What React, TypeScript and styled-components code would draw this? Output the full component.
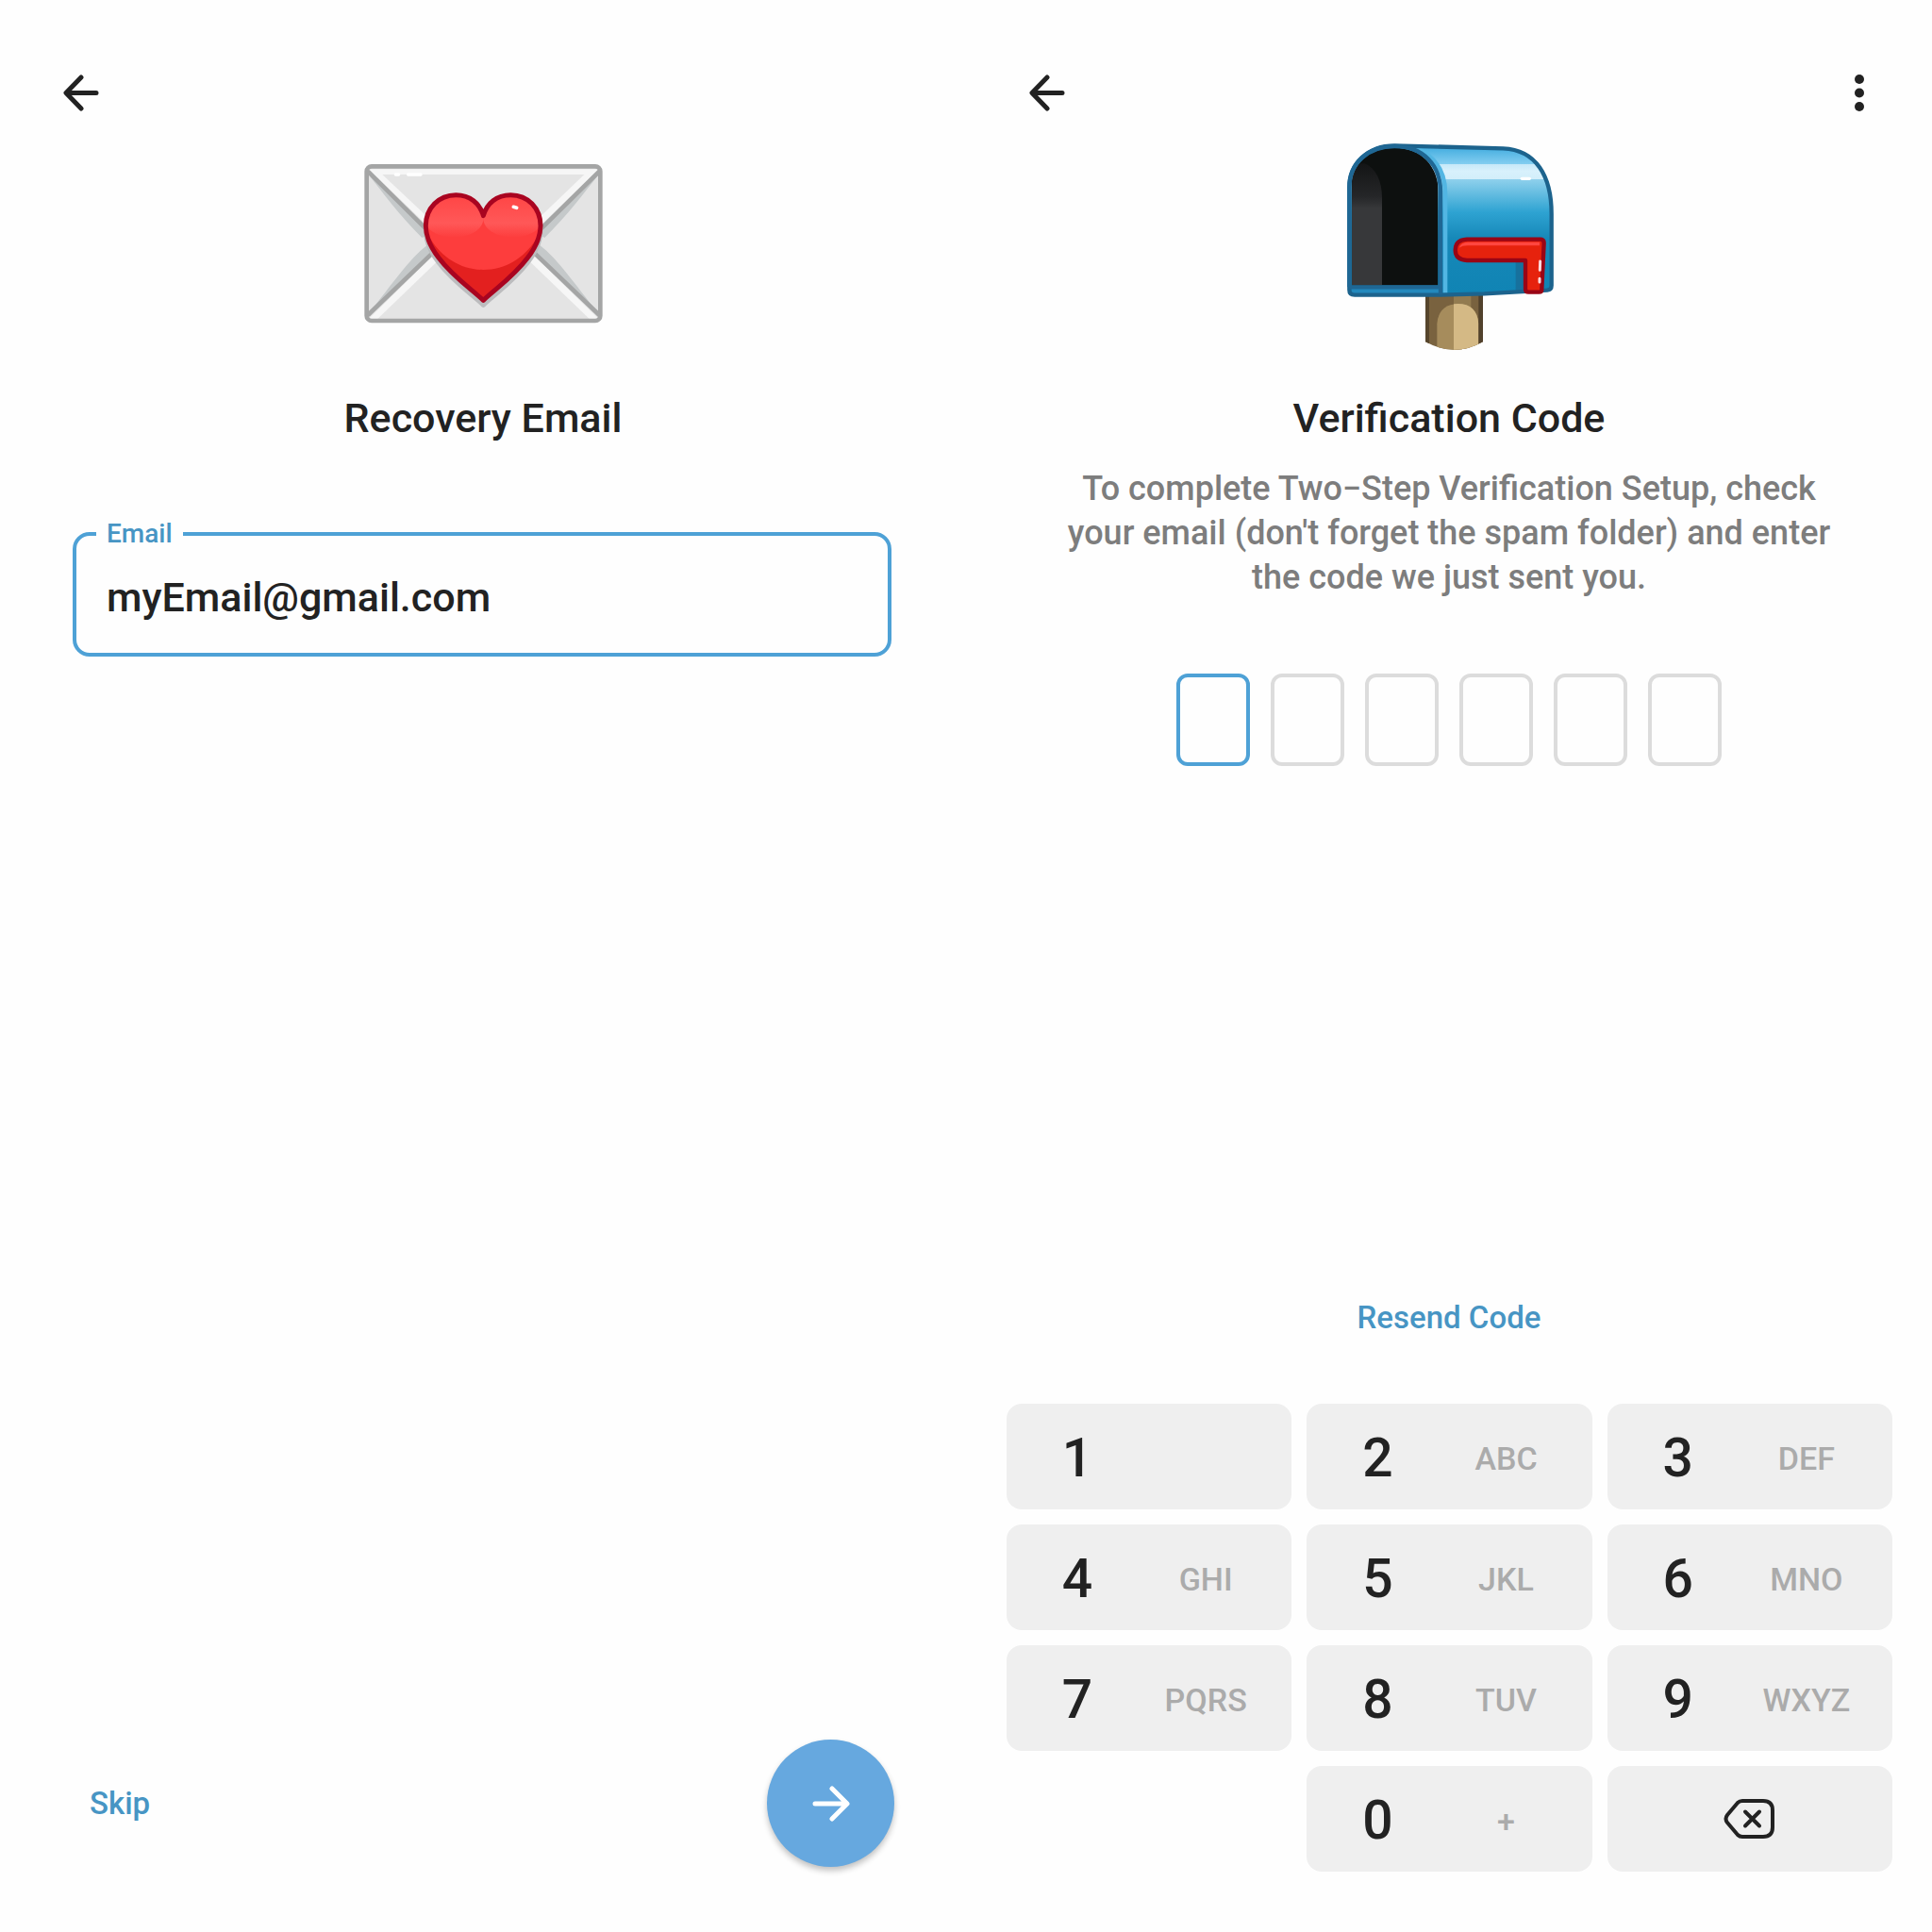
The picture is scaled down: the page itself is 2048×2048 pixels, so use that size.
import React from "react";
import styled, { createGlobalStyle } from "styled-components";

const color = {
  page: "#fefefe",
  ink: "#222222",
  muted: "#7d7d7d",
  hint: "#ababab",
  key: "#efefef",
  outline: "#dcdcdc",
  accent: "#4ea1d6",
  link: "#4795c4",
  fab: "#66a8df",
};

const GlobalStyle = createGlobalStyle`
  *, *::before, *::after { box-sizing: border-box; }
  body {
    margin: 0;
    background: ${color.page};
    color: ${color.ink};
    font-family: Roboto, "Liberation Sans", sans-serif;
    font-weight: 500;
  }
  button, input { font: inherit; color: inherit; }
`;

const Screens = styled.div`
  display: grid;
  grid-template-columns: 1fr 1fr;
  min-height: 100vh;

  @media (max-width: 1100px) {
    grid-template-columns: 1fr;
  }
`;

const Screen = styled.main`
  display: flex;
  flex-direction: column;
  min-height: 100vh;
`;

const TopBar = styled.header`
  display: flex;
  justify-content: space-between;
  padding: 68px 46px 2px 55px;
`;

const IconButton = styled.button`
  display: grid;
  place-items: center;
  width: 62px;
  height: 60px;
  padding: 0;
  border: 0;
  background: none;
  cursor: pointer;
`;

const Hero = styled.div`
  display: flex;
  justify-content: center;
  height: 260px;
`;

const Title = styled.h1`
  margin: 24px 0 0;
  font-size: 43px;
  line-height: 58px;
  font-weight: 500;
  text-align: center;
`;

const Description = styled.p`
  margin: 23px 0 0;
  padding: 0 100px;
  color: ${color.muted};
  font-size: 36px;
  line-height: 47px;
  text-align: center;
`;

const Field = styled.fieldset`
  margin: 77px 79px 0 77px;
  padding: 0 21px;
  border: 4px solid ${color.accent};
  border-radius: 18px;
`;

const FieldLegend = styled.legend`
  padding: 0 11px;
  color: ${color.link};
  font-size: 28px;
  line-height: 34px;
`;

const EmailInput = styled.input`
  display: block;
  width: 100%;
  height: 109px;
  padding: 0 11px 10px;
  border: 0;
  outline: 0;
  background: none;
  font-size: 43px;
`;

const CodeRow = styled.div`
  display: flex;
  justify-content: center;
  gap: 22px;
  margin-top: 78px;
`;

const CodeInput = styled.input<{ $active: boolean }>`
  width: 78px;
  height: 98px;
  padding: 0;
  border: 4px solid ${(p) => (p.$active ? color.accent : color.outline)};
  border-radius: 12px;
  outline: 0;
  background: none;
  font-size: 43px;
  text-align: center;
`;

const TextButton = styled.button`
  padding: 16px;
  border: 0;
  background: none;
  color: ${color.link};
  font-size: 33px;
  line-height: 40px;
  cursor: pointer;
`;

const BottomBar = styled.footer`
  display: flex;
  align-items: center;
  justify-content: space-between;
  margin-top: auto;
  padding: 0 76px 69px 79px;
`;

const NextButton = styled.button`
  display: grid;
  place-items: center;
  width: 135px;
  height: 135px;
  padding: 0;
  border: 0;
  border-radius: 50%;
  background: ${color.fab};
  color: #ffffff;
  box-shadow: 0 4px 6px rgba(0, 0, 0, 0.24);
  cursor: pointer;
`;

const Resend = styled.div`
  display: flex;
  justify-content: center;
  margin-top: auto;
  padding-bottom: 55px;
`;

const Keypad = styled.div`
  display: grid;
  grid-template-columns: repeat(3, 1fr);
  grid-auto-rows: 112px;
  gap: 16px;
  padding: 0 42px 64px 43px;
`;

const Key = styled.button`
  display: grid;
  grid-template-columns: 62px 1fr;
  align-items: center;
  column-gap: 14px;
  padding: 4px 0 0 44px;
  border: 0;
  border-radius: 16px;
  background: ${color.key};
  text-align: center;
  cursor: pointer;
`;

const ZeroKey = styled(Key)`
  grid-column: 2;
`;

const DeleteKey = styled(Key)`
  grid-template-columns: 1fr;
  grid-column: 3;
  justify-items: center;
  padding: 0;
`;

const Digit = styled.span`
  font-size: 57px;
  line-height: 64px;
`;

const Letters = styled.span`
  color: ${color.hint};
  font-size: 34px;
  line-height: 40px;
`;

const BackArrow = () => (
  <svg width="40" height="40" viewBox="0 0 40 40" fill="none" stroke="currentColor" strokeWidth="5" strokeLinecap="round" strokeLinejoin="round" aria-hidden="true">
    <path d="M36 20.500H4.500M20 4L4 20.500L20 37" />
  </svg>
);

const NextArrow = () => (
  <svg width="40" height="40" viewBox="0 0 40 40" fill="none" stroke="currentColor" strokeWidth="5" strokeLinecap="round" strokeLinejoin="round" aria-hidden="true">
    <path d="M3 20H36M21 4L37 20L21 36" />
  </svg>
);

const MoreDots = () => (
  <svg width="12" height="40" viewBox="0 0 12 40" fill="currentColor" aria-hidden="true">
    <circle cx="6" cy="6" r="5" />
    <circle cx="6" cy="20.500" r="5" />
    <circle cx="6" cy="35" r="5" />
  </svg>
);

const Backspace = () => (
  <svg width="56" height="44" viewBox="0 0 56 44" fill="none" stroke={color.ink} strokeWidth="4" strokeLinecap="round" strokeLinejoin="round" aria-hidden="true">
    <path d="M20 3H42Q52 3 52 13V31Q52 41 42 41H20Q17 41 15 39L4 26Q1 22 4 18L15 5Q17 3 20 3Z" />
    <path d="M23 14.500L38 29.500M38 14.500L23 29.500" />
  </svg>
);

const heart =
  "M427 505C385 466 330 430 285 370C256 332 244 302 244 268C244 212 285 170 340 170C384 170 416 196 427 236C438 196 470 170 514 170C569 170 609 212 609 268C609 302 597 332 568 370C523 430 469 466 427 505Z";

const LoveLetter = () => (
  <svg width="290" height="260" viewBox="-9 -60 870 780" role="img" aria-label="Envelope with a heart">
    <defs>
      <clipPath id="envelopeClip">
        <rect x="55" y="79" width="745" height="492" rx="18" />
      </clipPath>
      <clipPath id="heartClip">
        <path d={heart} />
      </clipPath>
      <linearGradient id="lobe" gradientUnits="userSpaceOnUse" x1="0" y1="175" x2="0" y2="305">
        <stop offset="0" stopColor="#ff4646" />
        <stop offset="0.650" stopColor="#ff5858" />
        <stop offset="1" stopColor="#fd3d3d" />
      </linearGradient>
    </defs>
    <g clipPath="url(#envelopeClip)">
      <rect x="55" y="79" width="745" height="492" fill="#e4e4e4" />
      <path d="M62 105C105 160 160 235 232 306L262 290Z" fill="#c5c9ca" />
      <path d="M794 105C750 160 695 235 622 306L592 290Z" fill="#c5c9ca" />
      <path d="M62 548C140 450 190 375 248 330L270 345Z" fill="#c5c9ca" />
      <path d="M794 548C715 450 665 375 607 330L585 345Z" fill="#c5c9ca" />
      <path d="M62 88H794L430 440Z" fill="#f6f6f6" />
      <path d="M106 105H748L430 410Z" fill="#e4e4e4" />
      <path d="M62 565L300 330H555L794 565Z" fill="#f6f6f6" />
      <path d="M90 565L315 348H540L765 565Z" fill="#e4e4e4" />
      <path d="M60 95L250 283M796 95L605 283M60 552L265 355M796 552L590 355" fill="none" stroke="#a4a5a5" strokeWidth="14" />
    </g>
    <rect x="56" y="79" width="743" height="491" rx="16" fill="none" stroke="#a4a5a5" strokeWidth="14" />
    <path d="M148 105H158M188 105H228" stroke="#ffffff" strokeWidth="10" strokeLinecap="round" />
    <path d={heart} transform="translate(0 15)" fill="#bcbcbe" stroke="#bcbcbe" strokeWidth="15" strokeLinejoin="round" />
    <path d={heart} fill="#fd3d3d" />
    <g clipPath="url(#heartClip)">
      <path d="M244 160H427V250C415 320 265 320 244 262Z" fill="url(#lobe)" />
      <path d="M427 160H610V262C589 320 439 320 427 250Z" fill="url(#lobe)" />
      <path d="M240 270C270 350 340 408 427 408C514 408 584 350 615 270V520H240Z" fill="#e3201f" />
    </g>
    <path d={heart} fill="none" stroke="#a90420" strokeWidth="15" strokeLinejoin="round" />
    <path d="M523 208L533 211" fill="none" stroke="#ffffff" strokeWidth="11" strokeLinecap="round" />
  </svg>
);

const shell =
  "M235 73L580 82C685 86 734 170 734 290V518Q734 531 720 533L520 544L380 548H108Q91 548 91 532V205C91 130 150 73 235 73Z";
const flag =
  "M465 371H698Q710 371 710 383L703 530Q703 539 694 539H661Q651 539 651 529V438H465Q428 436 428 405Q428 373 465 371Z";

const Mailbox = () => (
  <svg width="270" height="260" viewBox="3 0 810 780" role="img" aria-label="Open mailbox with lowered flag">
    <defs>
      <linearGradient id="shellFill" gradientUnits="userSpaceOnUse" x1="0" y1="80" x2="0" y2="545">
        <stop offset="0" stopColor="#45aee0" />
        <stop offset="0.110" stopColor="#82cdf0" />
        <stop offset="0.111" stopColor="#c5e8f8" />
        <stop offset="0.160" stopColor="#d8f1fc" />
        <stop offset="0.215" stopColor="#d2eefa" />
        <stop offset="0.217" stopColor="#8ed0ec" />
        <stop offset="0.440" stopColor="#2ea3d2" />
        <stop offset="0.620" stopColor="#1688b8" />
        <stop offset="1" stopColor="#1084b4" />
      </linearGradient>
      <linearGradient id="innerFill" gradientUnits="userSpaceOnUse" x1="0" y1="130" x2="0" y2="280">
        <stop offset="0" stopColor="#141516" />
        <stop offset="0.700" stopColor="#252628" />
        <stop offset="0.950" stopColor="#37383a" />
      </linearGradient>
      <clipPath id="innerClip">
        <path d="M98 518V205C98 130 155 80 235 80C320 80 374 138 374 220V518Z" />
      </clipPath>
      <clipPath id="postClip">
        <path d="M333 540H516V697Q425 748 333 697Z" />
      </clipPath>
    </defs>
    <g clipPath="url(#postClip)">
      <rect x="333" y="540" width="183" height="200" fill="#79623f" />
      <rect x="333" y="540" width="12" height="200" fill="#56452c" />
      <rect x="423" y="540" width="55" height="200" fill="#927b50" />
      <path d="M370 740V640Q375 578 437 576Q497 578 502 640V740Z" fill="#a68c5c" />
      <path d="M423 740V577Q497 570 502 640V740Z" fill="#d4b985" />
      <rect x="502" y="540" width="14" height="200" fill="#51412c" />
    </g>
    <path d={shell} fill="url(#shellFill)" />
    <path d="M300 80C360 105 396 150 396 225V542" fill="none" stroke="#52b6e3" strokeWidth="14" />
    <path d="M620 440H650V532L620 536Z" fill="#17719d" />
    <path d="M98 525H380V544H98Z" fill="#2389bd" />
    <path d={shell} fill="none" stroke="#1c638d" strokeWidth="13" strokeLinejoin="round" />
    <g clipPath="url(#innerClip)">
      <rect x="98" y="80" width="276" height="440" fill="#0d100f" />
      <path d="M98 130H140C175 145 195 185 195 240V518H98Z" fill="url(#innerFill)" />
    </g>
    <path d="M91 523V205C91 130 150 75 235 75C325 75 381 135 381 220V545M91 523H381" fill="none" stroke="#1f6794" strokeWidth="13" />
    <path d="M640 178H664" stroke="#ffffff" strokeWidth="10" strokeLinecap="round" />
    <path d={flag} fill="#e6220d" />
    <path d="M440 398Q446 380 467 380H696V391H467Q450 391 440 398Z" fill="#ff4640" />
    <path d={flag} fill="none" stroke="#990516" strokeWidth="13" strokeLinejoin="round" />
    <path d="M698 441L697 469M696 496V507" stroke="#ffd9dc" strokeWidth="9" strokeLinecap="round" />
  </svg>
);

const keys = [
  ["1", ""],
  ["2", "ABC"],
  ["3", "DEF"],
  ["4", "GHI"],
  ["5", "JKL"],
  ["6", "MNO"],
  ["7", "PQRS"],
  ["8", "TUV"],
  ["9", "WXYZ"],
];

const RecoveryEmail = () => (
  <Screen>
    <TopBar>
      <IconButton type="button" aria-label="Back">
        <BackArrow />
      </IconButton>
    </TopBar>
    <Hero>
      <LoveLetter />
    </Hero>
    <Title>Recovery Email</Title>
    <Field>
      <FieldLegend>
        <label htmlFor="email">Email</label>
      </FieldLegend>
      <EmailInput id="email" type="email" defaultValue="myEmail@gmail.com" />
    </Field>
    <BottomBar>
      <TextButton type="button">Skip</TextButton>
      <NextButton type="button" aria-label="Next">
        <NextArrow />
      </NextButton>
    </BottomBar>
  </Screen>
);

const VerificationCode = () => (
  <Screen>
    <TopBar>
      <IconButton type="button" aria-label="Back">
        <BackArrow />
      </IconButton>
      <IconButton type="button" aria-label="More options">
        <MoreDots />
      </IconButton>
    </TopBar>
    <Hero>
      <Mailbox />
    </Hero>
    <Title>Verification Code</Title>
    <Description>
      To complete Two−Step Verification Setup, check your email (don't forget the spam folder) and enter the code we
      just sent you.
    </Description>
    <CodeRow>
      {[1, 2, 3, 4, 5, 6].map((n) => (
        <CodeInput key={n} $active={n === 1} aria-label={`Code digit ${n}`} inputMode="numeric" maxLength={1} />
      ))}
    </CodeRow>
    <Resend>
      <TextButton type="button">Resend Code</TextButton>
    </Resend>
    <Keypad>
      {keys.map(([digit, letters]) => (
        <Key key={digit} type="button">
          <Digit>{digit}</Digit>
          {letters && <Letters>{letters}</Letters>}
        </Key>
      ))}
      <ZeroKey type="button">
        <Digit>0</Digit>
        <Letters>+</Letters>
      </ZeroKey>
      <DeleteKey type="button" aria-label="Delete">
        <Backspace />
      </DeleteKey>
    </Keypad>
  </Screen>
);

export default function App() {
  return (
    <>
      <GlobalStyle />
      <Screens>
        <RecoveryEmail />
        <VerificationCode />
      </Screens>
    </>
  );
}
